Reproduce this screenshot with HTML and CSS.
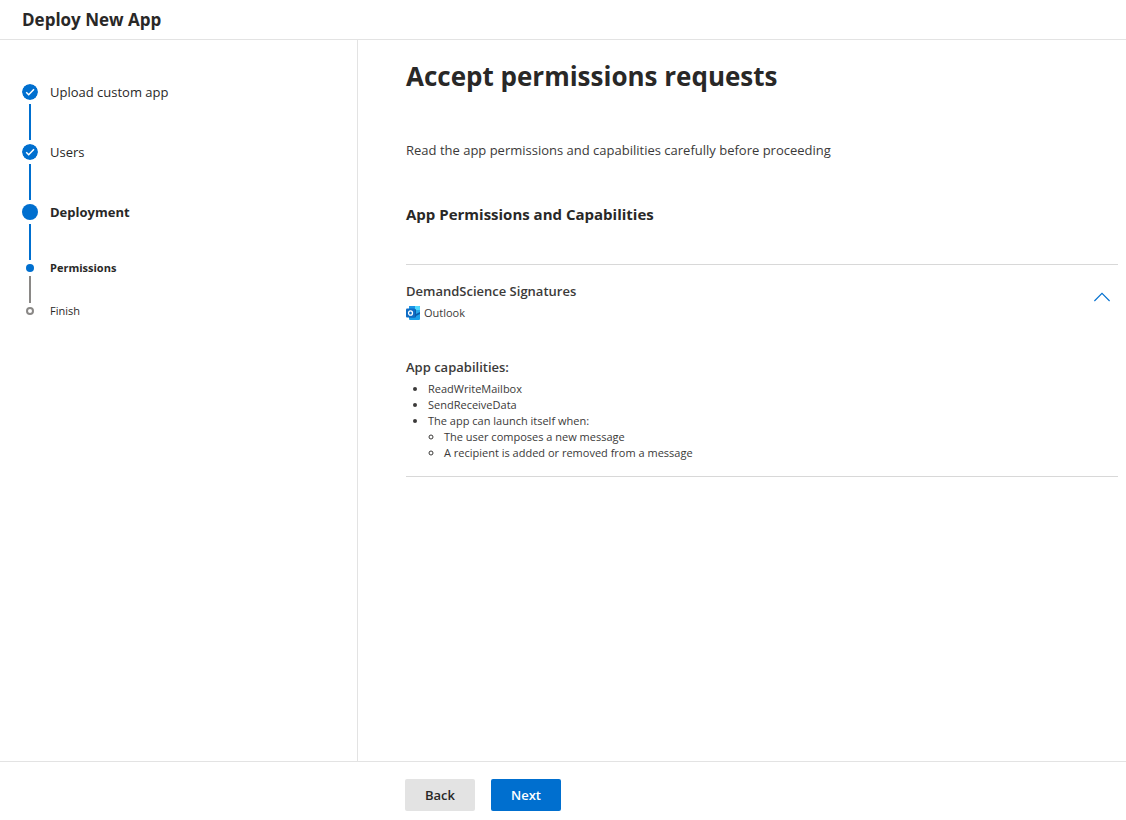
FILE: index.html
```
<!DOCTYPE html>
<html lang="en">
<head>
    <meta charset="UTF-8">
    <meta name="viewport" content="width=device-width, initial-scale=1.0">
    <title>Deploy New App</title>
    <link rel="stylesheet" href="styles.css">
</head>
<body>
    <!-- header -->
    <header class="topbar">
        <h1 class="topbar-title">Deploy New App</h1>
    </header>

    <div class="wizard">
        <!-- steps -->
        <nav class="sidebar" aria-label="Deployment steps">
            <ol class="steps">
                <li class="step">
                    <div class="rail">
                        <svg class="marker" viewBox="0 0 16 16" aria-hidden="true">
                            <circle cx="8" cy="8" r="8" fill="#006fcf"/>
                            <path d="M4.2 8.3 6.7 10.8 12 5.3" fill="none" stroke="#fff" stroke-width="1.5"/>
                        </svg>
                        <span class="line"></span>
                    </div>
                    <span class="step-label">Upload custom app</span>
                </li>
                <li class="step">
                    <div class="rail">
                        <svg class="marker" viewBox="0 0 16 16" aria-hidden="true">
                            <circle cx="8" cy="8" r="8" fill="#006fcf"/>
                            <path d="M4.2 8.3 6.7 10.8 12 5.3" fill="none" stroke="#fff" stroke-width="1.5"/>
                        </svg>
                        <span class="line"></span>
                    </div>
                    <span class="step-label">Users</span>
                </li>
                <li class="step current">
                    <div class="rail">
                        <span class="marker dot"></span>
                        <span class="line"></span>
                    </div>
                    <span class="step-label">Deployment</span>
                </li>
                <li class="step substep current" aria-current="step">
                    <div class="rail">
                        <span class="marker dot"></span>
                        <span class="line pending"></span>
                    </div>
                    <span class="step-label">Permissions</span>
                </li>
                <li class="step substep last">
                    <div class="rail">
                        <span class="marker ring"></span>
                    </div>
                    <span class="step-label">Finish</span>
                </li>
            </ol>
        </nav>

        <!-- content -->
        <main class="content">
            <h2 class="page-title">Accept permissions requests</h2>
            <p class="intro">Read the app permissions and capabilities carefully before proceeding</p>
            <h3 class="section-title">App Permissions and Capabilities</h3>

            <section class="app">
                <div class="app-header">
                    <div>
                        <h4 class="app-name">DemandScience Signatures</h4>
                        <div class="app-host">
                            <svg class="outlook-icon" viewBox="0 0 14 14" aria-hidden="true">
                                <path d="M3 1a1 1 0 0 1 1-1h9a1 1 0 0 1 1 1v7H3z" fill="#0f78d4"/>
                                <path d="M7 0h6a1 1 0 0 1 1 1v4H9z" fill="#50d9ff"/>
                                <path d="M4 0h5v4H3V1a1 1 0 0 1 1-1z" fill="#1a94e6"/>
                                <path d="M9 4h5v3l-4 2z" fill="#28a8ea"/>
                                <path d="M3 9h6l5-2.5V13a1 1 0 0 1-1 1H4a1 1 0 0 1-1-1z" fill="#1aa0ea"/>
                                <path d="M9 8.5 14 6v2L10 10z" fill="#0a5cab"/>
                                <path d="M3 3h6a1 1 0 0 1 1 1v6.500a1 1 0 0 1-1 1H3z" fill="#0a5cab"/>
                                <rect y="2.500" width="9" height="9" rx="1" fill="#0f6cc4"/>
                                <ellipse cx="4.500" cy="7" rx="2" ry="2.200" fill="none" stroke="#fff" stroke-width="1.300"/>
                            </svg>
                            <span>Outlook</span>
                        </div>
                    </div>
                    <button class="toggle" type="button" aria-expanded="true" aria-controls="capabilities" aria-label="Collapse DemandScience Signatures">
                        <svg viewBox="0 0 16 16" aria-hidden="true">
                            <path d="M.4 12 8 4.4 15.6 12" fill="none" stroke="#006fcf" stroke-width="1.1"/>
                        </svg>
                    </button>
                </div>
                <div id="capabilities" class="app-body">
                    <h5 class="app-subtitle">App capabilities:</h5>
                    <ul class="capabilities">
                        <li>ReadWriteMailbox</li>
                        <li>SendReceiveData</li>
                        <li>The app can launch itself when:
                            <ul>
                                <li>The user composes a new message</li>
                                <li>A recipient is added or removed from a message</li>
                            </ul>
                        </li>
                    </ul>
                </div>
            </section>
        </main>
    </div>

    <!-- footer -->
    <footer class="actions">
        <button class="btn" type="button">Back</button>
        <button class="btn btn-primary" type="button">Next</button>
    </footer>
</body>
</html>
```
FILE: styles.css
```
:root{
    --blue: #006fcf;
    --text: #292827;
    --border: #e3e3e3;
    --sidebar: 358px;
}

*{
    margin: 0;
    padding: 0;
    box-sizing: border-box;
}

body{
    display: flex;
    flex-direction: column;
    min-height: 100vh;
    background: #fff;
    color: var(--text);
    font-family: "Segoe UI", "Open Sans", "Noto Sans", sans-serif;
    font-size: 13px;
    line-height: 20px;
}

/* header */
.topbar{
    padding: 8px 22px;
    border-bottom: 1px solid var(--border);
}

.topbar-title{
    font-size: 17px;
    font-weight: 700;
    line-height: 23px;
}

.wizard{
    flex: 1;
    display: flex;
}

/* steps */
.sidebar{
    flex: 0 0 var(--sidebar);
    padding: 44px 22px;
    border-right: 1px solid var(--border);
}

.steps{
    list-style: none;
}

.step{
    display: flex;
    gap: 12px;
    min-height: 60px;
    line-height: 16px;
}

.rail{
    display: flex;
    flex-direction: column;
    align-items: center;
    gap: 4px;
    width: 16px;
    padding-bottom: 4px;
}

.marker{
    flex: none;
    width: 16px;
    height: 16px;
    border-radius: 50%;
}

.dot{
    background: var(--blue);
}

.ring{
    border: 2px solid #8a8886;
}

.line{
    flex: 1;
    width: 2px;
    background: var(--blue);
}

.line.pending{
    background: #8a8886;
}

.current .step-label{
    font-weight: 700;
}

.substep{
    min-height: 43px;
    font-size: 11px;
    line-height: 8px;
}

.substep.last{
    min-height: 0;
}

.substep .marker{
    width: 8px;
    height: 8px;
}

/* content */
.content{
    flex: 1;
    min-width: 0;
    padding: 18px 8px 24px 48px;
}

.page-title{
    font-size: 26px;
    font-weight: 700;
    line-height: 36px;
}

.intro{
    margin-top: 46px;
    color: #3b3a39;
}

.section-title{
    margin-top: 44px;
    font-size: 15px;
    font-weight: 700;
    line-height: 20px;
}

.app{
    margin-top: 40px;
    padding: 16px 0 15px;
    border-top: 1px solid #d8d8d8;
    border-bottom: 1px solid #d8d8d8;
    color: #3b3a39;
}

.app-header{
    display: flex;
    justify-content: space-between;
    align-items: flex-start;
}

.app-name,
.app-subtitle{
    font-size: 13px;
    font-weight: 600;
    line-height: 20px;
}

.app-host{
    display: flex;
    align-items: center;
    gap: 4px;
    margin-top: 4px;
    font-size: 11px;
    line-height: 16px;
}

.outlook-icon{
    width: 14px;
    height: 14px;
}

.toggle{
    width: 32px;
    height: 32px;
    padding: 8px;
    border: none;
    background: none;
    cursor: pointer;
}

.toggle svg{
    display: block;
}

.app-body{
    padding-top: 36px;
}

.capabilities{
    margin-top: 4px;
    padding-left: 22px;
    font-size: 11px;
    line-height: 16px;
}

.capabilities ul{
    padding-left: 16px;
}

/* footer */
.actions{
    display: flex;
    gap: 16px;
    padding: 17px 22px 9px 405px;
    border-top: 1px solid var(--border);
}

.btn{
    min-width: 70px;
    height: 32px;
    border: none;
    border-radius: 2px;
    background: var(--border);
    color: var(--text);
    font-family: inherit;
    font-size: 13px;
    font-weight: 600;
    cursor: pointer;
}

.btn-primary{
    background: var(--blue);
    color: #fff;
}
```
